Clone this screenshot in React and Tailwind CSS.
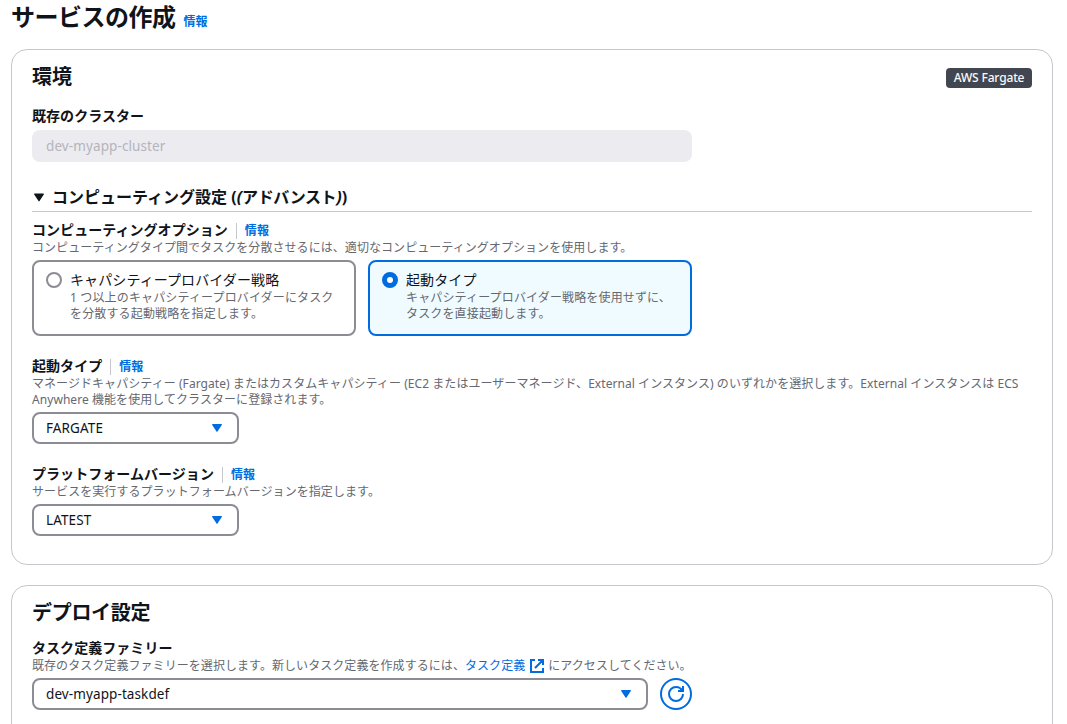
const fontFamily = "font-['Noto_Sans','Noto_Sans_CJK_JP',sans-serif]"

function Caret({ className }) {
  return (
    <svg viewBox="0 0 10 8" className={className} fill="currentColor" aria-hidden="true">
      <path d="M0.6 0h8.8c.5 0 .7.5.4.9L5.5 7.6c-.2.4-.8.4-1 0L.2.9C-.1.5.1 0 .6 0z" />
    </svg>
  )
}

function InfoLink() {
  return (
    <a href="#" className="text-[12px] leading-4 font-bold text-[#006ce0]">
      情報
    </a>
  )
}

function Label({ children, info }) {
  return (
    <div className="flex h-5 items-center text-[14px] leading-5 font-bold tracking-[0.05px] whitespace-nowrap">
      <span>{children}</span>
      {info && (
        <span className="mt-px ml-2 flex h-4 items-center border-l border-[#c6c6cd] pt-px pl-2">
          <InfoLink />
        </span>
      )}
    </div>
  )
}

function Description({ children }) {
  return <p className="text-[12px] leading-4 tracking-[0.06px] whitespace-nowrap text-[#656871]">{children}</p>
}

function Select({ value, className }) {
  return (
    <button
      type="button"
      className={`flex h-8 items-center justify-between rounded-lg border-2 border-[#8c8c94] bg-white pr-[15px] pl-3 text-[13.5px] leading-5 ${className}`}
    >
      <span className="tracking-[0.1px]">{value}</span>
      <Caret className="h-2 w-[10px] text-[#006ce0]" />
    </button>
  )
}

function Tile({ title, selected, children }) {
  return (
    <label
      className={`flex h-[76px] w-[324px] gap-2 rounded-lg border-2 pt-2 pl-3 ${
        selected ? "border-[#006ce0] bg-[#f0fbff]" : "border-[#8c8c94] bg-white"
      }`}
    >
      <span
        className={`mt-[2px] h-4 w-4 shrink-0 rounded-full bg-white ${
          selected ? "border-[5px] border-[#006ce0]" : "border-2 border-[#8c8c94]"
        }`}
      />
      <span className="block whitespace-nowrap">
        <span className="block h-5 text-[14px] leading-5 tracking-[0.1px]">{title}</span>
        <span className="block text-[12px] leading-4 tracking-[0.15px] text-[#656871]">{children}</span>
      </span>
    </label>
  )
}

export default function App() {
  return (
    <div className={`h-[724px] w-[1067px] overflow-hidden bg-white text-[#0f141a] ${fontFamily}`}>
      {/* Page title */}
      <header className="flex h-[49px] items-start pl-[11px]">
        <h1 className="mt-[2px] text-[24px] leading-[30px] font-bold tracking-[-0.5px]">サービスの作成</h1>
        <span className="mt-[14px] ml-2 flex">
          <InfoLink />
        </span>
      </header>

      {/* Environment */}
      <section className="ml-[11px] h-[516px] w-[1042px] rounded-2xl border border-[#c6c6cd] px-5 pt-[15px]">
        <div className="flex h-6 items-center justify-between">
          <h2 className="text-[20px] leading-6 font-bold">環境</h2>
          <span className="mt-px flex h-5 w-[86px] items-center justify-center rounded bg-[#424650] text-[12px] leading-4 font-medium tracking-[-0.15px] whitespace-nowrap text-[#f9f9fa]">
            AWS Fargate
          </span>
        </div>

        <div className="mt-[17px]">
          <Label>既存のクラスター</Label>
          <div className="mt-1 flex h-8 w-[660px] items-center rounded-lg bg-[#ebebf0] pl-[14px] text-[13.5px] tracking-[0.1px] text-[#b4b4bb]">
            dev-myapp-cluster
          </div>
        </div>

        <div className="mt-[23px] flex h-[27px] items-center border-b border-[#c6c6cd] pb-[2px] text-[16px] leading-6 font-bold">
          <Caret className="ml-[2px] h-[9px] w-[10px]" />
          <h3 className="ml-2 whitespace-nowrap">
            コンピューティング設定 (<em>(</em>
            <span className="tracking-[-0.4px]">アドバンスト</span>
            <em>)</em>)
          </h3>
        </div>

        <div className="mt-2">
          <Label info>コンピューティングオプション</Label>
          <Description>
            コンピューティングタイプ間でタスクを分散させるには、適切なコンピューティングオプションを使用します。
          </Description>
          <div className="mt-1 flex gap-3">
            <Tile title="キャパシティープロバイダー戦略">
              1 つ以上のキャパシティープロバイダーにタスク
              <br />
              を分散する起動戦略を指定します。
            </Tile>
            <Tile title="起動タイプ" selected>
              キャパシティープロバイダー戦略を使用せずに、
              <br />
              タスクを直接起動します。
            </Tile>
          </div>
        </div>

        <div className="mt-5">
          <Label info>起動タイプ</Label>
          <Description>
            マネージドキャパシティー (Fargate) またはカスタムキャパシティー (EC2 またはユーザーマネージド、External
            インスタンス) のいずれかを選択します。External インスタンスは ECS
            <br />
            Anywhere 機能を使用してクラスターに登録されます。
          </Description>
          <Select value="FARGATE" className="mt-1 w-[207px]" />
        </div>

        <div className="mt-5">
          <Label info>プラットフォームバージョン</Label>
          <Description>サービスを実行するプラットフォームバージョンを指定します。</Description>
          <Select value="LATEST" className="mt-1 w-[207px]" />
        </div>
      </section>

      {/* Deployment */}
      <section className="mt-5 ml-[11px] h-[240px] w-[1042px] rounded-2xl border border-[#c6c6cd] px-5 pt-[15px]">
        <h2 className="text-[20px] leading-6 font-bold tracking-[-0.3px]">デプロイ設定</h2>
        <div className="mt-[13px]">
          <Label>タスク定義ファミリー</Label>
          <Description>
            既存のタスク定義ファミリーを選択します。新しいタスク定義を作成するには、
            <a href="#" className="text-[#006ce0]">
              タスク定義
              <svg
                viewBox="0 0 16 16"
                className="mr-[3px] ml-1 inline-block h-4 w-4 align-[-4px]"
                fill="none"
                stroke="currentColor"
                strokeWidth="2"
                aria-hidden="true"
              >
                <path d="M6 2H2v12h12v-4M9 2h5v5M6 10l8-8" />
              </svg>
            </a>
            にアクセスしてください。
          </Description>
          <div className="mt-1 flex gap-3">
            <Select value="dev-myapp-taskdef" className="w-[616px]" />
            <button
              type="button"
              aria-label="更新"
              className="flex h-8 w-8 items-center justify-center rounded-full border-2 border-[#006ce0] text-[#006ce0]"
            >
              <svg viewBox="0 0 16 16" className="h-4 w-4" fill="none" stroke="currentColor" strokeWidth="2">
                <path d="M15 8c0 3.900-3.100 7-7 7s-7-3.100-7-7 3.100-7 7-7c2.800 0 5.200 1.600 6.300 4M10 5h5V0" />
              </svg>
            </button>
          </div>
        </div>
      </section>
    </div>
  )
}
